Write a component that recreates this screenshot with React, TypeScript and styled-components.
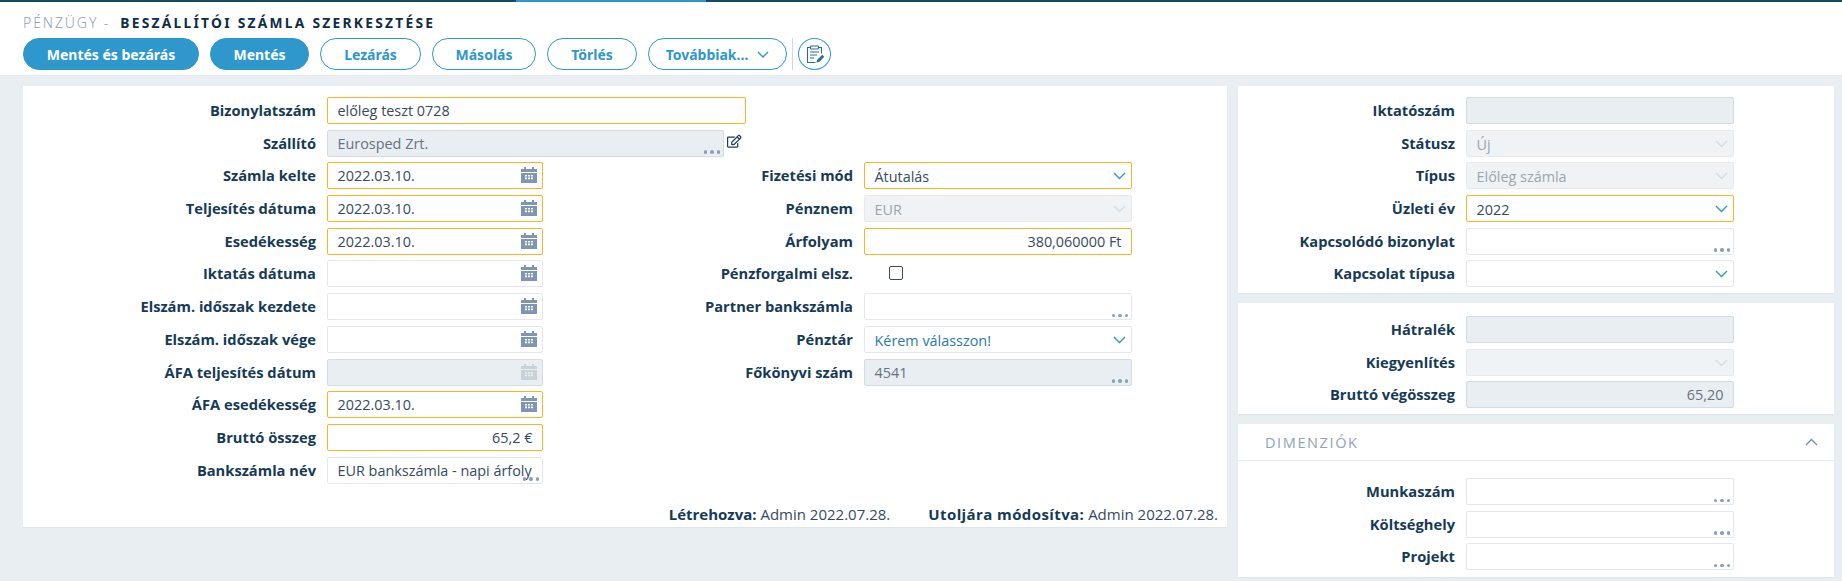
import React from "react";
import styled, { createGlobalStyle } from "styled-components";
import { FaRegEdit } from "react-icons/fa";

const Global = createGlobalStyle`
  html, body { margin: 0; padding: 0; background: #e9eef2; }
  body { font-family: "Open Sans", "Liberation Sans", sans-serif; color: #354a5e; }
  * { box-sizing: border-box; }
`;

const Page = styled.div`
  width: 1842px;
  height: 581px;
  overflow: hidden;
  background: #e9eef2;
`;
const Header = styled.header`
  height: 75px;
  background: #fff;
`;
const TopBar = styled.div`
  display: flex;
  height: 2px;
  background: #154a63;
`;
const TopBarActive = styled.div`
  width: 190px;
  margin-left: 516px;
  background: #2e97cc;
`;
const Title = styled.div`
  display: flex;
  align-items: center;
  height: 22px;
  margin: 9px 0 5px 23px;
  font-family: "Noto Sans", "Open Sans", sans-serif;
  font-size: 14px;
  letter-spacing: 1.9px;
  white-space: nowrap;
`;
const TitleModule = styled.span`
  color: #8f9fb3;
  font-weight: 300;
  margin-right: 10px;
`;
const TitlePage = styled.span`
  color: #0f2d45;
  font-weight: 700;
  font-size: 13.8px;
  letter-spacing: 2.25px;
`;
const Toolbar = styled.div`
  display: flex;
  align-items: center;
  gap: 11px;
  padding-left: 23px;
`;
const Button = styled.button<{ $primary?: boolean; $w: number }>`
  display: flex;
  align-items: center;
  justify-content: center;
  gap: 9px;
  width: ${(p) => p.$w}px;
  height: 32px;
  padding: 0;
  border-radius: 16px;
  border: 1px solid #2e97cc;
  background: ${(p) => (p.$primary ? "#2e97cc" : "#fff")};
  color: ${(p) => (p.$primary ? "#fff" : "#2e97cc")};
  font-family: "Noto Sans", "Open Sans", sans-serif;
  font-weight: 700;
  font-size: 14px;
  white-space: nowrap;
`;
const ToolSeparator = styled.div`
  width: 1px;
  height: 32px;
  margin: 0 -6px 0 -6px;
  background: #cfd8e2;
`;
const IconButton = styled.button`
  display: flex;
  align-items: center;
  justify-content: center;
  width: 33px;
  height: 32px;
  padding: 0;
  border-radius: 50%;
  border: 1px solid #2e97cc;
  background: #fff;
`;
const Main = styled.main`
  display: flex;
  align-items: flex-start;
  gap: 11px;
  padding: 11px 8px 0 23px;
`;
const Card = styled.section`
  background: #fff;
  box-shadow: 0 1px 1px #dfe5eb;
`;
const LeftCard = styled(Card)`
  display: flex;
  flex-direction: column;
  width: 1204px;
  height: 441px;
  padding-top: 11px;
`;
const Side = styled.div`
  display: flex;
  flex-direction: column;
  gap: 10px;
  width: 596px;
`;
const SideCard = styled(Card)<{ $h: number; $top: number }>`
  height: ${(p) => p.$h}px;
  padding-top: ${(p) => p.$top}px;
`;
const Columns = styled.div`
  display: flex;
`;
const Column = styled.div<{ $w: number }>`
  width: ${(p) => p.$w}px;
`;
const Row = styled.div`
  display: flex;
  align-items: flex-start;
  height: 32.7px;
`;
const Label = styled.label<{ $w: number; $gap: number }>`
  flex: none;
  width: ${(p) => p.$w}px;
  margin-right: ${(p) => p.$gap}px;
  text-align: right;
  font-weight: 700;
  font-size: 14.7px;
  line-height: 27px;
  color: #163a56;
  white-space: nowrap;
`;
type Kind = "normal" | "required" | "disabled" | "muted";
const Field = styled.div<{ $w: number; $kind?: Kind; $right?: boolean; $blue?: boolean; $sel?: boolean }>`
  position: relative;
  flex: none;
  width: ${(p) => p.$w}px;
  height: 27px;
  padding: 0 9.5px;
  border-radius: 2px;
  border: 1px solid
    ${(p) =>
      p.$kind === "required"
        ? "#fbb324"
        : p.$kind === "disabled"
          ? "#d2dbe6"
          : p.$kind === "muted"
            ? "#e6eaef"
            : "#e4e8ee"};
  background: ${(p) =>
    p.$kind === "disabled" ? "#e9eef2" : p.$kind === "muted" ? "#f0f3f6" : "#fff"};
  color: ${(p) =>
    p.$blue ? "#2b79a8" : p.$kind === "disabled" ? "#66727f" : p.$kind === "muted" ? "#9aa5ae" : "#354a5e"};
  text-align: ${(p) => (p.$right ? "right" : "left")};
  font-size: 14.4px;
  line-height: ${(p) => (p.$sel ? 28 : 26)}px;
  white-space: nowrap;
  overflow: hidden;
`;
const Dots = styled.span`
  position: absolute;
  right: 3px;
  bottom: 2px;
  display: flex;
  gap: 3px;
`;
const Dot = styled.i`
  width: 3.5px;
  height: 3.5px;
  border-radius: 50%;
  background: #8ea0b8;
`;
const CalendarSlot = styled.svg<{ $faded?: boolean }>`
  position: absolute;
  right: 5px;
  top: 4px;
  width: 16px;
  height: 16px;
  fill: ${(p) => (p.$faded ? "#c9d1d9" : "#7f96b2")};
`;
const ChevronSlot = styled.svg<{ $faded?: boolean }>`
  position: absolute;
  right: 5px;
  top: 9px;
  width: 13px;
  height: 8px;
  fill: none;
  stroke: ${(p) => (p.$faded ? "#d5dce3" : "#2e97cc")};
  stroke-width: 1.4;
`;
const EditLink = styled.span`
  display: flex;
  margin: 4px 0 0 3px;
  font-size: 14.5px;
  color: #1d3d55;
`;
const CheckBox = styled.span`
  display: block;
  width: 14px;
  height: 14px;
  margin: 6px 0 0 25px;
  border: 1px solid #3c4a57;
  border-radius: 2px;
  background: #fff;
`;
const Footer = styled.div`
  display: flex;
  justify-content: flex-end;
  gap: 38px;
  margin-top: auto;
  padding: 0 9px 3px 0;
  font-size: 15px;
  line-height: 20px;
  color: #354a5e;
`;
const Strong = styled.b<{ $wide?: boolean }>`
  font-weight: 700;
  font-size: 15px;
  letter-spacing: ${(p) => (p.$wide ? "0.4px" : "0")};
  color: #163a56;
`;
const SectionHead = styled.div`
  display: flex;
  align-items: center;
  justify-content: space-between;
  height: 37px;
  padding: 0 16px 0 27px;
  border-bottom: 1px solid #e6eaef;
  font-size: 14.5px;
  letter-spacing: 1.6px;
  color: #8ea3bd;
`;
const SectionBody = styled.div`
  padding-top: 17px;
`;
const CollapseIcon = styled.svg`
  width: 13px;
  height: 8px;
  fill: none;
  stroke: #6f8fb0;
  stroke-width: 1.3;
`;

const DotsMark = () => (
  <Dots>
    <Dot />
    <Dot />
    <Dot />
  </Dots>
);
const Chevron = ({ faded }: { faded?: boolean }) => (
  <ChevronSlot $faded={faded} viewBox="0 0 13 8">
    <path d="M1 1l5.5 5.5L12 1" />
  </ChevronSlot>
);
const Calendar = ({ faded }: { faded?: boolean }) => (
  <CalendarSlot $faded={faded} viewBox="0 0 16 16">
    <path d="M3 0h2v2h6V0h2v2h3v3H0V2h3z" />
    <path
      fillRule="evenodd"
      d="M0 6h16v10H0zM4 8v1.6h2V8zM7 8v1.6h2V8zM10 8v1.6h2V8zM4 10.6v1.6h2v-1.6zM7 10.6v1.6h2v-1.6zM10 10.6v1.6h2v-1.6z"
    />
  </CalendarSlot>
);
const ClipboardIcon = () => (
  <svg width="21" height="21" viewBox="0 0 21 21" fill="none" stroke="#2a6d99" strokeWidth="1.1">
    <path d="M6 3.5H3.5v15h8M15 3.5h2.5v6" />
    <rect x="6.5" y="2" width="8" height="3" rx="0.8" />
    <path d="M6 8h9M6 11h7M6 14h4" />
    <path d="M12.5 18.5l.6-2.6 5.2-5.2 2 2-5.2 5.2z" fill="#2a6d99" stroke="none" />
  </svg>
);

type Spec = { l: string; t?: string; k?: Kind; a?: "cal" | "sel" | "dots"; r?: boolean; blue?: boolean };

const FormRow = ({ s, lw, gap, fw }: { s: Spec; lw: number; gap: number; fw: number }) => (
  <Row>
    <Label $w={lw} $gap={gap}>
      {s.l}
    </Label>
    <Field $w={fw} $kind={s.k} $right={s.r} $blue={s.blue} $sel={s.a === "sel"}>
      {s.t}
      {s.a === "cal" && <Calendar faded={s.k === "disabled"} />}
      {s.a === "sel" && <Chevron faded={s.k === "muted"} />}
      {s.a === "dots" && <DotsMark />}
    </Field>
  </Row>
);

const leftRows: Spec[] = [
  { l: "Számla kelte", t: "2022.03.10.", k: "required", a: "cal" },
  { l: "Teljesítés dátuma", t: "2022.03.10.", k: "required", a: "cal" },
  { l: "Esedékesség", t: "2022.03.10.", k: "required", a: "cal" },
  { l: "Iktatás dátuma", a: "cal" },
  { l: "Elszám. időszak kezdete", a: "cal" },
  { l: "Elszám. időszak vége", a: "cal" },
  { l: "ÁFA teljesítés dátum", k: "disabled", a: "cal" },
  { l: "ÁFA esedékesség", t: "2022.03.10.", k: "required", a: "cal" },
  { l: "Bruttó összeg", t: "65,2 €", k: "required", r: true },
  { l: "Bankszámla név", t: "EUR bankszámla - napi árfoly", a: "dots" },
];
const midRows: Spec[] = [
  { l: "Fizetési mód", t: "Átutalás", k: "required", a: "sel" },
  { l: "Pénznem", t: "EUR", k: "muted", a: "sel" },
  { l: "Árfolyam", t: "380,060000 Ft", k: "required", r: true },
];
const midRows2: Spec[] = [
  { l: "Partner bankszámla", a: "dots" },
  { l: "Pénztár", t: "Kérem válasszon!", a: "sel", blue: true },
  { l: "Főkönyvi szám", t: "4541", k: "disabled", a: "dots" },
];
const side1: Spec[] = [
  { l: "Iktatószám", k: "disabled" },
  { l: "Státusz", t: "Új", k: "muted", a: "sel" },
  { l: "Típus", t: "Előleg számla", k: "muted", a: "sel" },
  { l: "Üzleti év", t: "2022", k: "required", a: "sel" },
  { l: "Kapcsolódó bizonylat", a: "dots" },
  { l: "Kapcsolat típusa", a: "sel" },
];
const side2: Spec[] = [
  { l: "Hátralék", k: "disabled" },
  { l: "Kiegyenlítés", k: "muted", a: "sel" },
  { l: "Bruttó végösszeg", t: "65,20", k: "disabled", r: true },
];
const side3: Spec[] = [
  { l: "Munkaszám", a: "dots" },
  { l: "Költséghely", a: "dots" },
  { l: "Projekt", a: "dots" },
];

export default function App() {
  return (
    <Page>
      <Global />
      <Header>
        <TopBar>
          <TopBarActive />
        </TopBar>
        <Title>
          <TitleModule>PÉNZÜGY -</TitleModule>
          <TitlePage>BESZÁLLÍTÓI SZÁMLA SZERKESZTÉSE</TitlePage>
        </Title>
        <Toolbar>
          <Button $primary $w={176}>Mentés és bezárás</Button>
          <Button $primary $w={99}>Mentés</Button>
          <Button $w={101}>Lezárás</Button>
          <Button $w={104}>Másolás</Button>
          <Button $w={90}>Törlés</Button>
          <Button $w={139}>
            Továbbiak...
            <svg width="12" height="7" viewBox="0 0 12 7" fill="none" stroke="#2e97cc" strokeWidth="1.4">
              <path d="M1 1l5 5 5-5" />
            </svg>
          </Button>
          <ToolSeparator />
          <IconButton>
            <ClipboardIcon />
          </IconButton>
        </Toolbar>
      </Header>
      <Main>
        <LeftCard>
          <FormRow s={{ l: "Bizonylatszám", t: "előleg teszt 0728", k: "required" }} lw={293} gap={11} fw={419} />
          <Row>
            <Label $w={293} $gap={11}>Szállító</Label>
            <Field $w={397} $kind="disabled">
              Eurosped Zrt.
              <DotsMark />
            </Field>
            <EditLink>
              <FaRegEdit />
            </EditLink>
          </Row>
          <Columns>
            <Column $w={520}>
              {leftRows.map((s) => (
                <FormRow key={s.l} s={s} lw={293} gap={11} fw={216} />
              ))}
            </Column>
            <Column $w={610}>
              {midRows.map((s) => (
                <FormRow key={s.l} s={s} lw={310} gap={11} fw={268} />
              ))}
              <Row>
                <Label $w={310} $gap={11}>Pénzforgalmi elsz.</Label>
                <CheckBox />
              </Row>
              {midRows2.map((s) => (
                <FormRow key={s.l} s={s} lw={310} gap={11} fw={268} />
              ))}
            </Column>
          </Columns>
          <Footer>
            <span>
              <Strong>Létrehozva:</Strong> Admin 2022.07.28.
            </span>
            <span>
              <Strong $wide>Utoljára módosítva:</Strong> Admin 2022.07.28.
            </span>
          </Footer>
        </LeftCard>
        <Side>
          <SideCard $h={207} $top={11}>
            {side1.map((s) => (
              <FormRow key={s.l} s={s} lw={217} gap={11} fw={268} />
            ))}
          </SideCard>
          <SideCard $h={111} $top={13}>
            {side2.map((s) => (
              <FormRow key={s.l} s={s} lw={217} gap={11} fw={268} />
            ))}
          </SideCard>
          <SideCard $h={153} $top={0}>
            <SectionHead>
              DIMENZIÓK
              <CollapseIcon viewBox="0 0 13 8">
                <path d="M1 7l5.5-5.5L12 7" />
              </CollapseIcon>
            </SectionHead>
            <SectionBody>
              {side3.map((s) => (
                <FormRow key={s.l} s={s} lw={217} gap={11} fw={268} />
              ))}
            </SectionBody>
          </SideCard>
        </Side>
      </Main>
    </Page>
  );
}
